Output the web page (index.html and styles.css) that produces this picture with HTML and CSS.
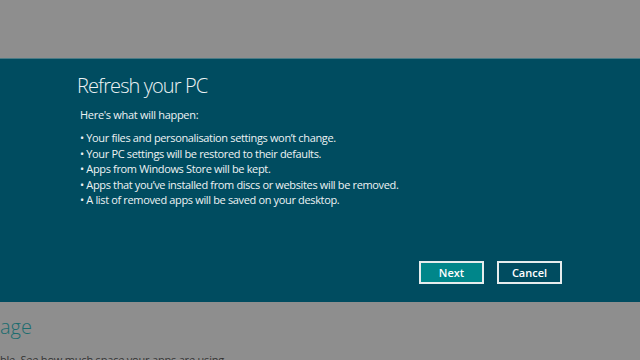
FILE: index.html
```html
<!DOCTYPE html>
<html>
<head>
    <title>Refresh your PC</title>
    <link rel="stylesheet" href="styles.css">
</head>
<body>
    <div class="backdrop-top"></div>

    <div class="dialog">
        <div class="dialog-inner">
            <h1 class="dialog-title">Refresh your PC</h1>
            <p class="intro">Here's what will happen:</p>
            <ul class="changes">
                <li>Your files and personalisation settings won’t change.</li>
                <li>Your PC settings will be restored to their defaults.</li>
                <li>Apps from Windows Store will be kept.</li>
                <li>Apps that you’ve installed from discs or websites will be removed.</li>
                <li>A list of removed apps will be saved on your desktop.</li>
            </ul>
            <div class="actions">
                <button class="btn btn-primary">Next</button>
                <button class="btn">Cancel</button>
            </div>
        </div>
    </div>

    <div class="behind">
        <h2 class="behind-title">age</h2>
        <p class="behind-text">ble. See how much space your apps are using.</p>
    </div>
</body>
</html>
```

FILE: styles.css
```css
body {
    margin: 0;
    width: 640px;
    height: 360px;
    overflow: hidden;
    background-color: #8e8e8e;
    font-family: "Open Sans", "DejaVu Sans", sans-serif;
}
.backdrop-top {
    height: 58px;
}
.dialog {
    height: 243px;
    background-color: #004c60;
    border-top: 1px solid #4a7b86;
}
.dialog-inner {
    width: 485px;
    margin-left: 77px;
    padding-top: 13px;
    color: #eef3f4;
}
.dialog-title {
    margin: 0;
    font-size: 20px;
    font-weight: 300;
    line-height: 27px;
    letter-spacing: -0.9px;
}
.intro {
    margin: 8px 0 0 3px;
    font-size: 11px;
    line-height: 16px;
    letter-spacing: -0.3px;
}
.changes {
    list-style: none;
    margin: 7px 0 0 3px;
    padding: 0;
    font-size: 11px;
    line-height: 15.5px;
    letter-spacing: -0.35px;
}
.changes li::before {
    content: "• ";
}
.actions {
    display: flex;
    justify-content: flex-end;
    gap: 13px;
    margin-top: 53px;
}
.btn {
    width: 65px;
    height: 23px;
    padding: 0;
    border: 2px solid #e6eced;
    background-color: #004c60;
    color: #ffffff;
    font-family: "Open Sans", "DejaVu Sans", sans-serif;
    font-size: 11px;
    font-weight: 600;
}
.btn-primary {
    background-color: #00868a;
}
.behind {
    padding-top: 10px;
}
.behind-title {
    margin: 0;
    font-size: 20px;
    font-weight: 300;
    line-height: 30px;
    color: #1b6c6e;
}
.behind-text {
    margin: 10px 0 0 0;
    font-size: 11px;
    line-height: 16px;
    letter-spacing: -0.2px;
    color: #333333;
}
```
